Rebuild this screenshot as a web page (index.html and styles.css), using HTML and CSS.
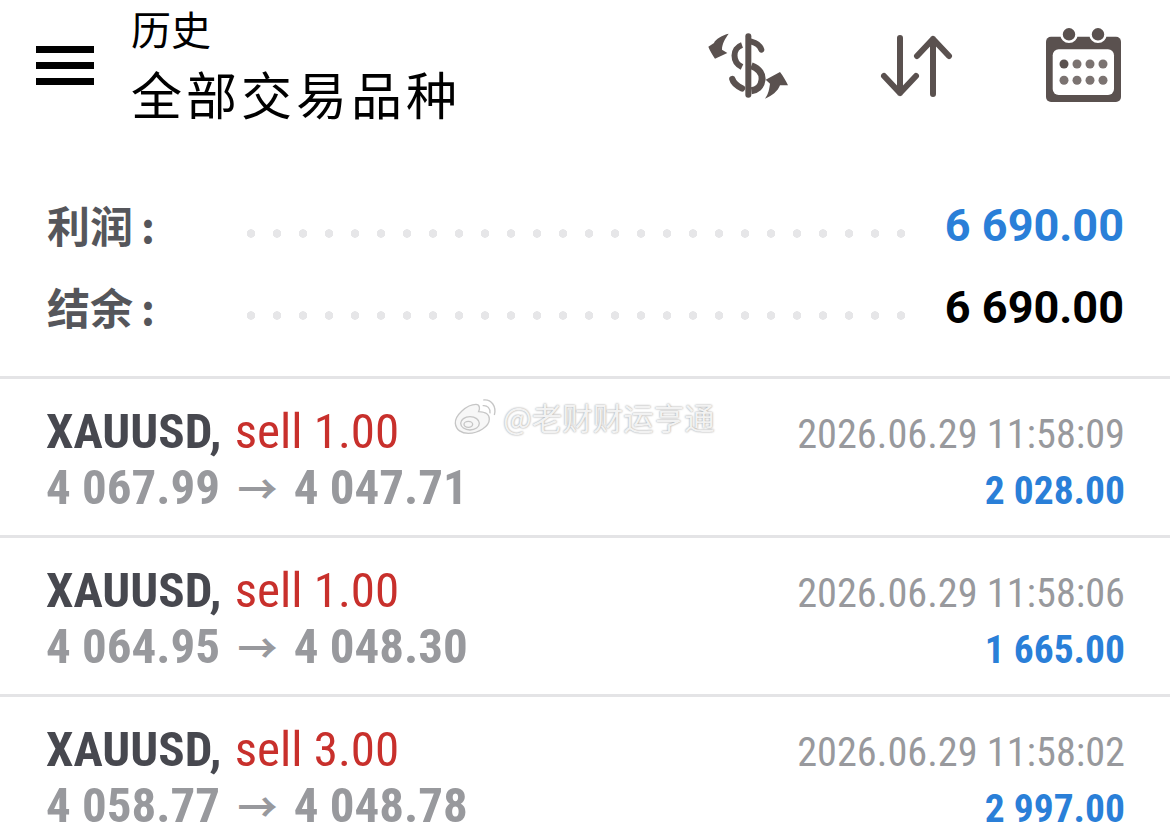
FILE: index.html
```html
<!DOCTYPE html>
<html lang="zh-CN">
<head>
<meta charset="utf-8">
<title>历史</title>
<link rel="stylesheet" href="styles.css">
</head>
<body>
<header class="top">
  <svg class="menu" width="58" height="42" viewBox="0 0 58 42"><path d="M0 3.500H58M0 19.500H58M0 35.500H58" stroke="#000" stroke-width="7"/></svg>
  <div class="titles"><div class="t1">历史</div><div class="t2">全部交易品种</div></div>
  <div class="icons">
    <svg class="ic1" width="84" height="72" viewBox="18 15 252 216" fill="#5a514f">
      <rect x="136" y="25" width="18" height="193" rx="9"/>
      <path d="M86 26C68 30 46 42 42 54L25 65C30 78 38 90 45 101L82 84 66 74C66 56 76 40 86 26Z"/>
      <path d="M195 221C206 206 208 190 210 176L197 164 240 141C250 154 258 168 264 181L240 181C234 198 215 214 195 221Z"/>
      <g fill="none" stroke="#5a514f">
        <path d="M154 50C170 54 180 62 184 74" stroke-width="18" stroke-linecap="round"/>
        <path d="M126 60C96 70 96 112 126 126" stroke-width="18"/>
        <path d="M154 122C180 132 188 150 186 165 184 185 170 195 154 197" stroke-width="21"/>
        <path d="M97 162C100 175 110 182 126 190" stroke-width="19" stroke-linecap="round"/>
      </g>
    </svg>
    <svg class="ic2" width="73" height="62" viewBox="0 0 73 62" fill="none" stroke="#5a514f" stroke-width="6" stroke-linecap="round" stroke-linejoin="round">
      <path d="M20 3V58M4 41 20 58 36 41"/>
      <path d="M53 59V4M37 21 53 4 69 21"/>
    </svg>
    <svg class="ic3" width="75" height="75" viewBox="0 0 75 75">
      <rect y="9.700" width="75" height="65.300" rx="5" fill="#5a514f"/>
      <g fill="#5a514f" stroke="#fff" stroke-width="2.500"><circle cx="23" cy="7.300" r="7.500"/><circle cx="52" cy="7.300" r="7.500"/></g>
      <rect x="6.700" y="22.300" width="61.300" height="45.700" rx="6" fill="#fff"/>
      <g fill="#7b7371"><circle cx="18" cy="37" r="4.500" fill="#5a514f"/><circle cx="31" cy="37" r="4.500"/><circle cx="44" cy="37" r="4.500"/><circle cx="57" cy="37" r="4.500"/><circle cx="18" cy="53.300" r="4.500"/><circle cx="31" cy="53.300" r="4.500"/><circle cx="44" cy="53.300" r="4.500"/><circle cx="57" cy="53.300" r="4.500"/></g>
    </svg>
  </div>
</header>
<section class="summary">
  <div class="sumrow"><span class="lbl">利润<span class="colon">:</span></span><span class="dots"></span><span class="val blue">6 690.00</span></div>
  <div class="sumrow"><span class="lbl">结余<span class="colon">:</span></span><span class="dots"></span><span class="val black">6 690.00</span></div>
</section>
<section class="list">
  <article class="deal">
    <div class="l1"><span class="sym">XAUUSD,</span> <span class="side">sell 1.00</span></div>
    <div class="time">2026.06.29 11:58:09</div>
    <div class="price">4 067.99 <span class="arrow">→</span> 4 047.71</div>
    <div class="profit">2 028.00</div>
  </article>
  <article class="deal">
    <div class="l1"><span class="sym">XAUUSD,</span> <span class="side">sell 1.00</span></div>
    <div class="time">2026.06.29 11:58:06</div>
    <div class="price">4 064.95 <span class="arrow">→</span> 4 048.30</div>
    <div class="profit">1 665.00</div>
  </article>
  <article class="deal">
    <div class="l1"><span class="sym">XAUUSD,</span> <span class="side">sell 3.00</span></div>
    <div class="time">2026.06.29 11:58:02</div>
    <div class="price">4 058.77 <span class="arrow">→</span> 4 048.78</div>
    <div class="profit">2 997.00</div>
  </article>
</section>
<div class="mark">
  <svg width="50" height="40" viewBox="0 0 150 120" fill="none" stroke="#c6c6c6" stroke-width="4">
    <path d="M16 85C14 62 50 28 78 28 90 28 90 42 86 50 100 50 118 55 118 72 118 95 85 115 55 115 35 115 18 105 16 85Z" fill="#f7f7f7"/>
    <ellipse cx="60" cy="85" rx="28" ry="20"/><ellipse cx="55" cy="88" rx="13" ry="9"/>
    <path d="M98 32C112 30 122 40 120 55M100 15C125 12 140 35 133 60"/>
  </svg>
  <span class="mark-text">@老财财运亨通</span>
</div>
</body>
</html>
```
FILE: styles.css
```css
* { box-sizing: border-box; }
html, body { margin: 0; padding: 0; }
body {
  position: relative;
  width: 1170px;
  height: 834px;
  overflow: hidden;
  background: #fff;
  font-family: Roboto, "Noto Sans CJK SC", sans-serif;
}
.top { display: flex; height: 186px; padding: 0 49px 0 36px; }
.menu { margin-top: 46px; flex: none; }
.titles { margin-left: 37px; padding-top: 5px; font-family: "Noto Sans CJK SC", sans-serif; color: #000; }
.t1 { font-size: 40px; line-height: 46px; }
.t2 { font-size: 51px; line-height: 64px; margin-top: 10px; letter-spacing: 4px; }
.icons { margin-left: auto; display: flex; align-items: flex-start; padding-top: 27px; }
.ic1 { margin-top: 3px; }
.ic2 { margin: 8px 0 0 90px; }
.ic3 { margin-left: 93px; }
.summary { height: 193px; padding: 0 46px 0 47px; border-bottom: 3px solid #e4e4e6; }
.sumrow { display: flex; align-items: center; height: 82px; }
.lbl { width: 191px; flex: none; margin-top: -6px; font: 700 43px/1 "Noto Sans CJK SC", sans-serif; color: #55565b; white-space: nowrap; }
.colon { margin-left: 8px; }
.dots { flex: none; width: 676px; height: 9px; margin-top: 12px; background: radial-gradient(circle, #e6e6e8 4px, transparent 4.500px) 0 0 / 26px 9px repeat-x; }
.val { margin-left: auto; margin-top: -3px; font-size: 45px; font-weight: 700; line-height: 1; white-space: nowrap; }
.blue { color: #2a7fd8; }
.black { color: #000; }
.deal {
  display: grid;
  grid-template-columns: 1fr auto;
  align-content: start;
  height: 159px;
  padding: 24px 45px 0 46px;
  border-bottom: 3px solid #e4e4e6;
  font-stretch: condensed;
}
.l1, .price, .time, .profit { white-space: nowrap; }
.l1 { font-size: 49px; line-height: 58px; }
.sym { font-weight: 700; color: #47484f; }
.side { margin-left: 2px; color: #c8302c; }
.time { font-size: 40.300px; line-height: 52px; margin-top: 6px; color: #98999d; text-align: right; }
.price { font-size: 49px; line-height: 54px; font-weight: 700; color: #98999d; }
.arrow { font-size: 40px; margin: 0 5px 0 6px; }
.profit { font-size: 39.500px; line-height: 54px; margin-top: 3px; font-weight: 700; color: #2a7fd8; text-align: right; }
.mark { position: absolute; left: 450px; top: 395px; display: flex; align-items: flex-start; gap: 3px; }
.mark-text { margin-top: 5px; color: #f2f2f2; font: 30.500px/34px "Noto Sans CJK SC", sans-serif; text-shadow: 0 0 2px #8f8f8f; }
```
